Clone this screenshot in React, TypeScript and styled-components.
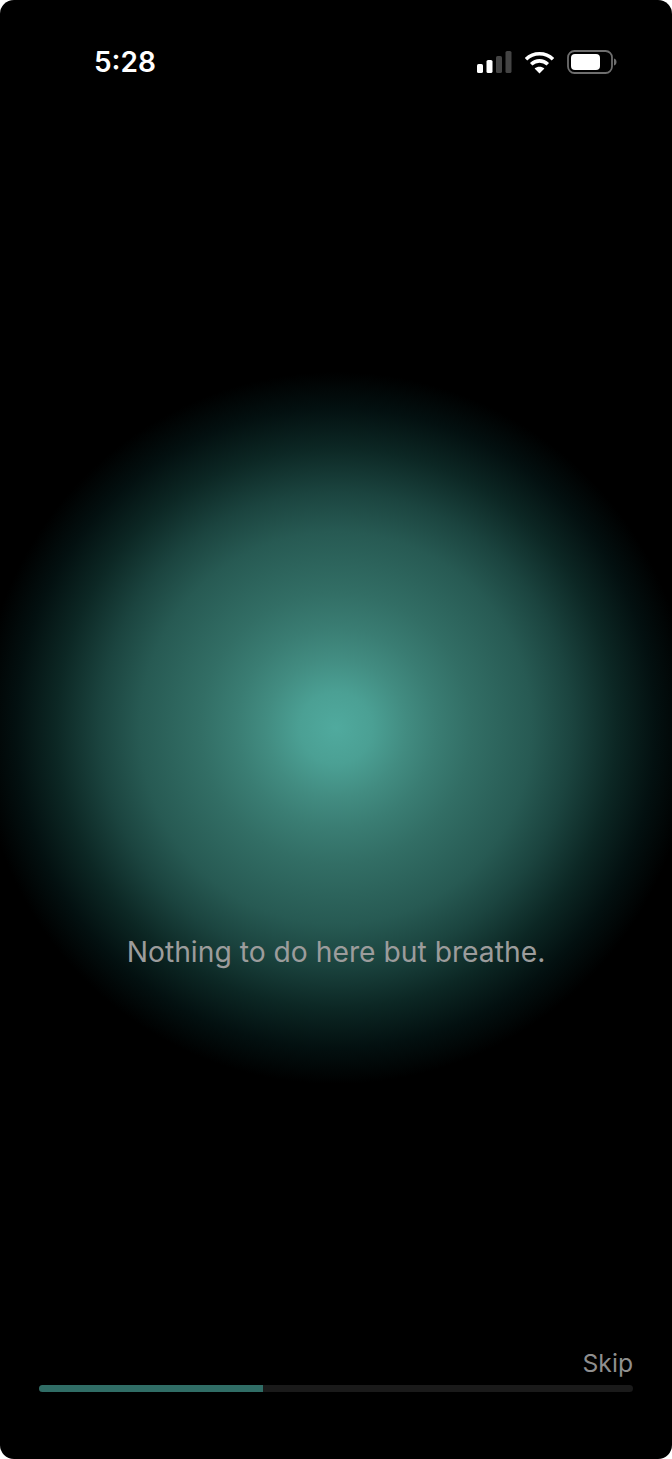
import React from "react";
import styled, { createGlobalStyle } from "styled-components";

const Global = createGlobalStyle`
  html, body { margin: 0; padding: 0; background: #fff; }
  #root { width: 672px; height: 1459px; }
`;

const Screen = styled.div`
  width: 672px;
  height: 1459px;
  box-sizing: border-box;
  border-radius: 14px;
  overflow: hidden;
  display: flex;
  flex-direction: column;
  font-family: Inter, "Liberation Sans", sans-serif;
  background-color: #000;
  background-image: radial-gradient(
    circle 356px at 336px 728px,
    #50aa9e 0,
    #4ba094 36px,
    #428c81 70px,
    #3a7d73 100px,
    #326e65 136px,
    #275a53 196px,
    #1b443f 236px,
    #0c2724 280px,
    #031010 320px,
    #000 356px
  );
`;

const StatusBar = styled.div`
  display: flex;
  align-items: center;
  justify-content: space-between;
  height: 30px;
  margin-top: 47px;
  padding: 0 55px 0 94px;
  flex: none;
`;

const Clock = styled.span`
  color: #fff;
  font-size: 28px;
  font-weight: 600;
  line-height: 30px;
`;

const StatusIcons = styled.div`
  display: flex;
  align-items: center;
  gap: 12px;
`;

const Message = styled.p`
  margin: 860px 0 0;
  height: 30px;
  color: #9c9c9c;
  font-size: 28.25px;
  line-height: 30px;
  text-align: center;
  flex: none;
`;

const Footer = styled.div`
  display: flex;
  flex-direction: column;
  align-items: flex-end;
  margin-top: auto;
  padding: 0 39px 67px;
`;

const Skip = styled.span`
  color: #8f8f8f;
  font-size: 24.7px;
  line-height: 30px;
  margin-bottom: 7px;
`;

const Track = styled.div`
  width: 100%;
  height: 7px;
  border-radius: 4px;
  background: #1a1a1a;
  overflow: hidden;
`;

const Fill = styled.div`
  height: 100%;
  background: #306d66;
`;

const Signal = () => (
  <svg width="35" height="23" viewBox="0 0 35 23">
    <rect x="0" y="13" width="6" height="9" rx="1.6" fill="#fff" />
    <rect x="9.5" y="9" width="6" height="13" rx="1.6" fill="#fff" />
    <rect x="19" y="5" width="6" height="17" rx="1.6" fill="#444" />
    <rect x="28.5" y="0" width="6" height="22" rx="1.6" fill="#444" />
  </svg>
);

const Wifi = () => (
  <svg width="31" height="23" viewBox="0 0 31 23" fill="none">
    <path d="M2 8.2C9.6 1 21.4 1 29 8.2" stroke="#fff" strokeWidth="3.6" />
    <path d="M7.2 13.2C12 8.7 19 8.7 23.8 13.2" stroke="#fff" strokeWidth="3.6" />
    <path d="M15.5 22.5 10.6 17.5C13.4 15 17.6 15 20.4 17.5Z" fill="#fff" />
  </svg>
);

const Battery = () => (
  <svg width="50" height="24" viewBox="0 0 50 24" fill="none">
    <rect x="1" y="1" width="44" height="22" rx="6.5" stroke="#6e6e6e" strokeWidth="1.8" />
    <rect x="4" y="4" width="29" height="16" rx="4" fill="#fff" />
    <path d="M47 8.5C48.6 9 49.5 10.3 49.5 12S48.6 15 47 15.5Z" fill="#6e6e6e" />
  </svg>
);

export default function App() {
  return (
    <>
      <Global />
      <Screen>
        <StatusBar>
          <Clock>5:28</Clock>
          <StatusIcons>
            <Signal />
            <Wifi />
            <Battery />
          </StatusIcons>
        </StatusBar>
        <Message>Nothing to do here but breathe.</Message>
        <Footer>
          <Skip>Skip</Skip>
          <Track>
            <Fill style={{ width: "37.7%" }} />
          </Track>
        </Footer>
      </Screen>
    </>
  );
}
